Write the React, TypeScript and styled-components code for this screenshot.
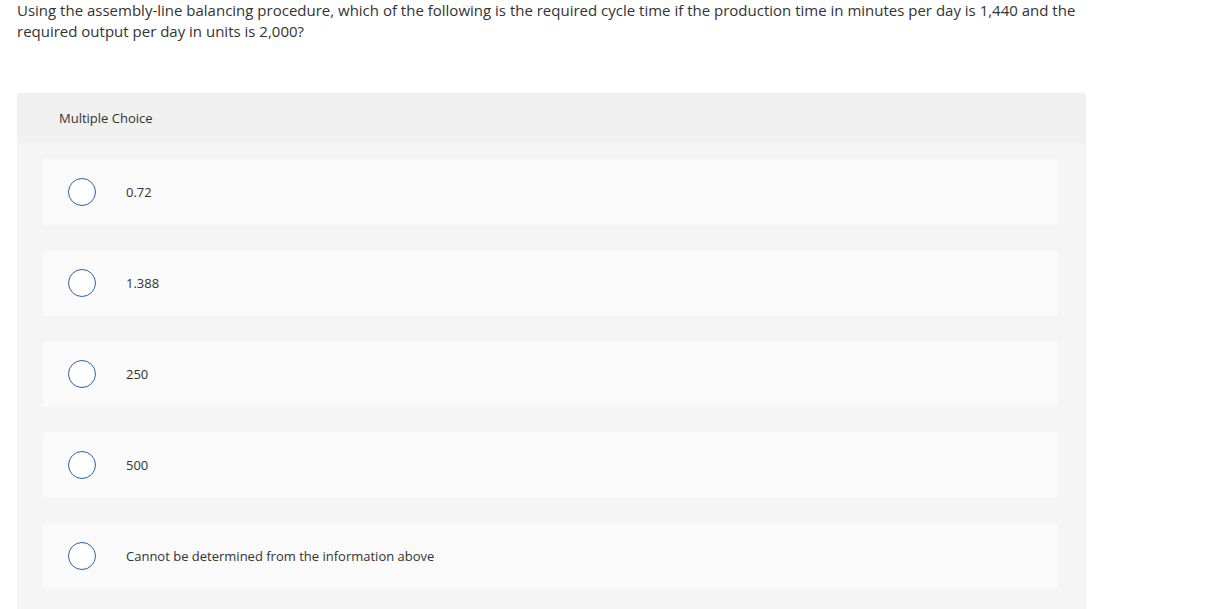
import React from "react";
import styled, { createGlobalStyle } from "styled-components";

const GlobalStyle = createGlobalStyle`
  body {
    margin: 0;
    background: #ffffff;
    font-family: "Open Sans", "Lato", sans-serif;
    color: #333333;
  }
`;

const Page = styled.div`
  padding: 0 17px;
`;

const Question = styled.p`
  margin: 0;
  font-size: 15px;
  line-height: 21px;
  color: #333333;
  white-space: nowrap;
`;

const Panel = styled.section`
  margin-top: 51px;
  width: 1069px;
  background: #f5f5f5;
  border-radius: 3px;
  padding-bottom: 24px;
`;

const PanelHeader = styled.div`
  height: 50px;
  display: flex;
  align-items: center;
  padding-left: 42px;
  background: #f0f0f0;
  border-radius: 3px 3px 0 0;
  font-size: 13px;
`;

const OptionList = styled.div`
  display: flex;
  flex-direction: column;
  gap: 25px;
  padding: 16px 28px 0 26px;
`;

const Option = styled.label`
  height: 66px;
  display: flex;
  align-items: center;
  padding-left: 25px;
  background: #fafafa;
  border-radius: 3px;
  font-size: 13px;
  cursor: pointer;
`;

const Radio = styled.span`
  width: 28px;
  height: 28px;
  box-sizing: border-box;
  border: 1.5px solid #2a64a0;
  border-radius: 50%;
  background: #ffffff;
  flex: none;
  margin-right: 30px;
`;

const choices = [
  "0.72",
  "1.388",
  "250",
  "500",
  "Cannot be determined from the information above",
];

export default function App() {
  return (
    <>
      <GlobalStyle />
      <Page>
        <Question>
          Using the assembly-line balancing procedure, which of the following is the required cycle time if the
          production time in minutes per day is 1,440 and the
          <br />
          required output per day in units is 2,000?
        </Question>
        <Panel>
          <PanelHeader>Multiple Choice</PanelHeader>
          <OptionList>
            {choices.map(c => (
              <Option key={c}>
                <Radio />
                {c}
              </Option>
            ))}
          </OptionList>
        </Panel>
      </Page>
    </>
  );
}
